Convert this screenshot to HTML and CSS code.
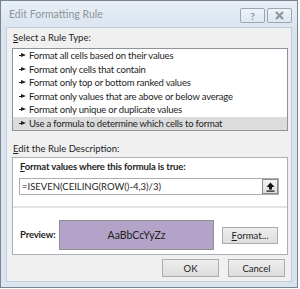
FILE: index.html
```html
<!DOCTYPE html>
<html>
<head>
    <title>Edit Formatting Rule</title>
    <link rel="stylesheet" href="styles.css">
</head>
<body>
    <div class="window">
        <div class="titlebar">
            <span class="title">Edit Formatting Rule</span>
            <div class="caption-btns">
                <span class="cap-btn">?</span>
                <span class="cap-btn">
                    <svg width="11" height="9" viewBox="0 0 11 9"><path d="M2 1 L9 8 M9 1 L2 8" stroke="#8d949c" stroke-width="2.2" fill="none"/></svg>
                </span>
            </div>
        </div>

        <div class="client">
            <div class="label"><u>S</u>elect a Rule Type:</div>
            <ul class="rule-list">
                <li><span class="bullet"></span>Format all cells based on their values</li>
                <li><span class="bullet"></span>Format only cells that contain</li>
                <li><span class="bullet"></span>Format only top or bottom ranked values</li>
                <li><span class="bullet"></span>Format only values that are above or below average</li>
                <li><span class="bullet"></span>Format only unique or duplicate values</li>
                <li class="selected"><span class="bullet"></span>Use a formula to determine which cells to format</li>
            </ul>

            <div class="label desc-label"><u>E</u>dit the Rule Description:</div>
            <div class="desc-box">
                <div class="desc-top">
                    <div class="bold-label"><u>F</u>ormat values where this formula is true:</div>
                    <div class="formula">
                        <span class="formula-text">=ISEVEN(CEILING(ROW()-4,3)/3)</span>
                        <span class="collapse-btn">
                            <svg width="9" height="10" viewBox="0 0 9 10"><path d="M4.5 0.5 L8.5 5 L6 5 L6 7.5 L3 7.5 L3 5 L0.5 5 Z" fill="#111"/><rect x="0.5" y="8.5" width="8" height="1.2" fill="#111"/></svg>
                        </span>
                    </div>
                </div>
                <div class="sep"></div>
                <div class="preview-row">
                    <span class="bold-label">Preview:</span>
                    <div class="preview-box">AaBbCcYyZz</div>
                    <span class="btn format-btn"><u>F</u>ormat...</span>
                </div>
            </div>

            <div class="dialog-btns">
                <span class="btn">OK</span>
                <span class="btn">Cancel</span>
            </div>
        </div>
    </div>
</body>
</html>
```

FILE: styles.css
```css
body {
    margin: 0;
    background: #ffffff;
    font-family: "Lato", "Open Sans", sans-serif;
    font-size: 9.5px;
    color: #1e1e1e;
}

.window {
    width: 298px;
    height: 288px;
    border: 1px solid #77838f;
    background: #d9e4ef;
    padding: 0 5px 5px 5px;
    box-sizing: border-box;
    display: flex;
    flex-direction: column;
}

.titlebar {
    height: 26px;
    display: flex;
    justify-content: space-between;
    background: linear-gradient(#e8eff6, #dbe5f0);
    margin: 0 -5px;
    padding: 0 5px 0 8px;
}

.title {
    color: #8e949a;
    font-size: 10.5px;
    padding-top: 7px;
}

.caption-btns {
    display: flex;
    gap: 2px;
    padding-top: 7px;
    height: 15px;
}

.cap-btn {
    width: 23px;
    height: 13px;
    border: 1px solid #9aa6b2;
    border-radius: 2px;
    background: linear-gradient(#eef3f8, #dfe7ef);
    display: flex;
    align-items: center;
    justify-content: center;
    color: #8d949c;
    font-weight: bold;
    font-size: 10px;
}

.client {
    flex: 1;
    background: #f0f0f0;
    border: 1px solid #c2cdd8;
    padding: 3px 3px 0 5px;
    display: flex;
    flex-direction: column;
}

.label {
    line-height: 14px;
    margin-left: 1px;
    margin-bottom: 3px;
}

.rule-list {
    list-style: none;
    margin: 0;
    padding: 0;
    background: #ffffff;
    border: 1px solid #8c949c;
}

.rule-list li {
    height: 13.5px;
    line-height: 13.5px;
    display: flex;
    align-items: center;
    padding-left: 6px;
    white-space: nowrap;
    letter-spacing: -0.2px;
}

.rule-list li.selected {
    background: #dcdcdc;
}

.bullet {
    width: 7px;
    height: 5px;
    margin-right: 3px;
    background: linear-gradient(#222, #222) 0 2px / 3px 1px no-repeat;
    position: relative;
}

.bullet::after {
    content: "";
    position: absolute;
    left: 2px;
    top: 0;
    border-left: 5px solid #222;
    border-top: 2.5px solid transparent;
    border-bottom: 2.5px solid transparent;
}

.desc-label {
    margin-top: 11px;
    margin-bottom: 1px;
}

.desc-box {
    background: #ffffff;
    border: 1px solid #a9afb5;
    display: flex;
    flex-direction: column;
}

.desc-top {
    padding: 2px 8px 11px 6px;
}

.bold-label {
    font-weight: bold;
    line-height: 14px;
    margin-left: 1px;
    letter-spacing: -0.15px;
}

.formula {
    margin-top: 4px;
    height: 17px;
    border: 1px solid #abadb3;
    display: flex;
    align-items: center;
    justify-content: space-between;
    box-sizing: border-box;
}

.formula-text {
    padding-left: 2px;
}

.collapse-btn {
    width: 16px;
    height: 15px;
    box-sizing: border-box;
    border: 1px solid #8a8a8a;
    background: linear-gradient(#f4f4f4, #dedede);
    display: flex;
    align-items: center;
    justify-content: center;
}

.sep {
    height: 2px;
    background: #e3e3e3;
}

.preview-row {
    display: flex;
    align-items: center;
    padding: 12px 9px 4px 6px;
}

.preview-box {
    width: 155px;
    height: 30px;
    box-sizing: border-box;
    border: 1px solid #8f8f8f;
    background: #b3a3c8;
    margin-left: auto;
    display: flex;
    align-items: center;
    justify-content: center;
    color: #222;
    font-size: 10.5px;
}

.btn {
    height: 17px;
    box-sizing: border-box;
    border: 1px solid #acacac;
    background: linear-gradient(#eeeeee, #dddddd);
    display: flex;
    align-items: center;
    justify-content: center;
}

.format-btn {
    width: 56px;
    margin-left: 8px;
}

.dialog-btns {
    display: flex;
    justify-content: flex-end;
    gap: 9px;
    margin-top: 4px;
    padding-right: 3px;
}

.dialog-btns .btn {
    width: 57px;
    height: 18px;
}
```
